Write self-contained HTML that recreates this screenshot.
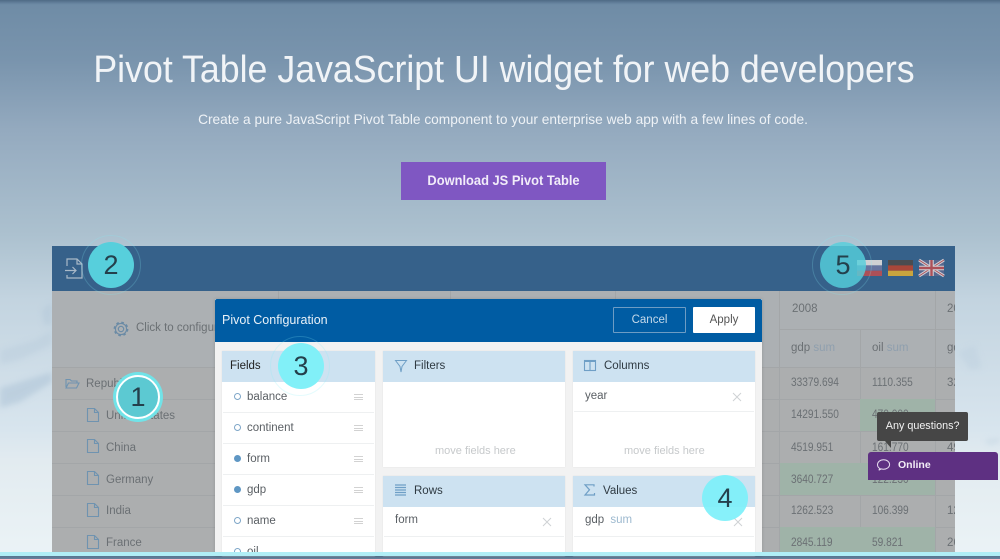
<!DOCTYPE html>
<html><head><meta charset="utf-8"><style>
*{box-sizing:border-box}
html,body{margin:0;padding:0}
body{width:1000px;height:556px;position:relative;overflow:hidden;font-family:"Liberation Sans",sans-serif;background:linear-gradient(180deg,#58748f 0,#6f8ca6 5px,#7994ad 60px,#94aabf 130px,#acc1cf 235px,#c3d4e0 300px,#d8e5ee 430px,#e2ebf0 460px,#ebf3f6 556px)}
div,span{position:absolute;white-space:nowrap}
svg{position:absolute;overflow:visible}
.t{color:#6b7074;font-size:11.5px;line-height:14px}
.n{transform:scaleX(.88);transform-origin:0 0}
.l{height:1px;background:#a3a6a8}
.v{width:1px;background:#a3a6a8}
.c{border-radius:50%;display:flex;align-items:center;justify-content:center;color:#24404c;font-size:27px;width:46px;height:46px}
.ring{border-radius:50%;border:1px solid rgba(130,235,245,.22)}
.ph{background:#cde2f1;height:31px}
.p{background:#fff;box-shadow:0 0 1px #d8d8d8}
.m{color:#5a5f64;font-size:11.5px;line-height:14px}
.h{color:#2f3a42;font-size:11.5px;line-height:14px}
.r{height:1px;background:#eef0f1}
.d{width:7px;height:7px;border-radius:50%;border:1px solid #7ea6c8;left:234px;background:#fff}
.f{background:#5f97c4;border-color:#5f97c4}
.g{left:354px;width:9px;height:6px;border-top:1px solid #d2d2d2;border-bottom:1px solid #d2d2d2}
.g:after{content:"";position:absolute;left:0;right:0;top:1.5px;height:1px;background:#d2d2d2}
.hint{color:#c6c9cb;font-size:11px}
</style></head><body>
<div style="left:0;top:0;width:1000px;height:4px;background:linear-gradient(#4f6a85,#6b88a3)"></div>

<svg width="1000" height="556" style="left:0;top:0"><defs><filter id="b"><feGaussianBlur stdDeviation="3"/></filter></defs>
<g filter="url(#b)" fill="#a9c0d4" opacity=".5"><path d="M0 350L35 340 52 330 52 345 20 360 0 365Z" opacity=".5"/><path d="M42 310L52 302 52 325 44 325Z" opacity=".7"/><path d="M0 388L52 372 52 382 20 402 0 408Z"/></g>
<g filter="url(#b)" fill="#bed0df" opacity=".5"><path d="M958 352L975 345 982 368 970 370Z"/><path d="M985 440L1000 438 1000 442 988 445Z"/></g></svg>

<div style="left:4px;width:1000px;top:48px;text-align:center;color:#f1f4f7;font-size:38px;line-height:44px;transform:scaleX(.94)">Pivot Table JavaScript UI widget for web developers</div>
<div style="left:3px;width:1000px;top:110px;text-align:center;color:#eef2f6;font-size:14px;line-height:18px;transform:scaleX(.98)">Create a pure JavaScript Pivot Table component to your enterprise web app with a few lines of code.</div>
<div style="left:401px;top:162px;width:205px;height:38px;background:#7f57c2;"></div>
<div style="left:401px;top:162px;width:205px;height:38px;color:#f1ecf9;font-size:14px;font-weight:700;text-align:center;line-height:37px;transform:scaleX(.92)">Download JS Pivot Table</div>

<!-- widget -->
<div style="left:52px;top:246px;width:903px;height:310px;background:#acaeaf;overflow:hidden">
<div style="left:0;top:0;width:903px;height:45px;background:#36618a"></div>
<div style="left:0;top:45px;width:903px;height:76px;background:#acb0b3"></div>
<div class="l" style="left:0;top:121px;width:903px"></div>
<div class="l" style="left:0;top:153px;width:903px"></div>
<div class="l" style="left:0;top:185px;width:903px"></div>
<div class="l" style="left:0;top:217px;width:903px"></div>
<div class="l" style="left:0;top:249px;width:903px"></div>
<div class="l" style="left:0;top:281px;width:903px"></div>
<div class="l" style="left:727px;top:83px;width:176px"></div>
<div class="v" style="left:226px;top:45px;height:8px"></div>
<div class="v" style="left:398px;top:45px;height:8px"></div>
<div class="v" style="left:563px;top:45px;height:8px"></div>
<div class="v" style="left:727px;top:45px;height:265px"></div>
<div class="v" style="left:808px;top:83px;height:227px"></div>
<div class="v" style="left:883px;top:45px;height:265px"></div>
<div style="left:808px;top:153px;width:75px;height:32px;background:#9fb3a8"></div>
<div style="left:728px;top:217px;width:155px;height:32px;background:#9fb3a8"></div>
<div style="left:728px;top:281px;width:155px;height:29px;background:#9fb3a8"></div>
</div>

<!-- widget header icon -->
<svg width="20" height="22" style="left:65px;top:258px" fill="none" stroke="#a9b9c8" stroke-width="1.2"><path d="M2 8V1h10l5 5v14H2v-3"/><path d="M12 1v5h5"/><path d="M0 12.5h11M7.5 9l3.5 3.5L7.5 16"/></svg>

<!-- flags -->
<svg width="25" height="16" style="left:857px;top:260px"><rect width="25" height="5.4" fill="#cfd0d3"/><rect y="5.4" width="25" height="5.3" fill="#66749f"/><rect y="10.7" width="25" height="5.3" fill="#ad5058"/></svg>
<svg width="25" height="16" style="left:888px;top:260px"><rect width="25" height="16" fill="#4b4c50"/><rect y="5.4" width="25" height="5.3" fill="#a9473a"/><rect y="10.7" width="25" height="5.3" fill="#c9a53e"/></svg>
<svg width="25" height="16" style="left:919px;top:260px"><rect width="25" height="16" fill="#57688f"/><path d="M0 0L25 16M25 0L0 16" stroke="#cfd0d6" stroke-width="3"/><path d="M0 0L25 16M25 0L0 16" stroke="#ad5058" stroke-width="1"/><path d="M12.5 0V16M0 8H25" stroke="#cfd0d6" stroke-width="4.5"/><path d="M12.5 0V16M0 8H25" stroke="#ad5058" stroke-width="2.4"/></svg>

<!-- left column -->
<svg width="16" height="16" style="left:113px;top:321px" fill="none" stroke="#6a8aa5"><circle cx="8" cy="8" r="2.7" stroke-width="1.1"/><circle cx="8" cy="8" r="5.6" stroke-width="1.1"/><circle cx="8" cy="8" r="6.6" stroke-width="1.6" stroke-dasharray="2.6 2.6"/></svg>
<div class="t" style="left:136px;top:321px">Click to configure</div>
<svg width="15" height="11" style="left:65px;top:378px" fill="none" stroke="#6f93b0" stroke-width="1.1"><path d="M1 9V1.5h4l1.5 1.5H12v2M1 10h10.5L14 5H3.5L1 10z"/></svg>
<div class="t" style="left:86px;top:377px">Republic</div>
<svg width="12" height="14" style="left:87px;top:408px" fill="none" stroke="#6f93b0" stroke-width="1.1"><path d="M.5.5h7l4 4v9H.5z M7.5.5v4h4"/></svg>
<div class="t" style="left:106px;top:409px">United States</div>
<svg width="12" height="14" style="left:87px;top:439px" fill="none" stroke="#6f93b0" stroke-width="1.1"><path d="M.5.5h7l4 4v9H.5z M7.5.5v4h4"/></svg>
<div class="t" style="left:106px;top:441px">China</div>
<svg width="12" height="14" style="left:87px;top:471px" fill="none" stroke="#6f93b0" stroke-width="1.1"><path d="M.5.5h7l4 4v9H.5z M7.5.5v4h4"/></svg>
<div class="t" style="left:106px;top:473px">Germany</div>
<svg width="12" height="14" style="left:87px;top:503px" fill="none" stroke="#6f93b0" stroke-width="1.1"><path d="M.5.5h7l4 4v9H.5z M7.5.5v4h4"/></svg>
<div class="t" style="left:106px;top:504px">India</div>
<svg width="12" height="14" style="left:87px;top:535px" fill="none" stroke="#6f93b0" stroke-width="1.1"><path d="M.5.5h7l4 4v9H.5z M7.5.5v4h4"/></svg>
<div class="t" style="left:106px;top:536px">France</div>

<!-- right columns -->
<div class="t" style="left:792px;top:302px">2008</div><div class="t" style="left:947px;top:302px;width:8px;overflow:hidden">2009</div>
<div class="t" style="left:791px;top:341px">gdp <span style="position:static;color:#8f9fae">sum</span></div>
<div class="t" style="left:872px;top:341px">oil <span style="position:static;color:#8f9fae">sum</span></div>
<div class="t" style="left:947px;top:341px;width:8px;overflow:hidden">gdp</div>
<div class="t n" style="left:791px;top:376px">33379.694</div><div class="t n" style="left:872px;top:376px">1110.355</div><div class="t" style="left:947px;top:376px;width:8px;overflow:hidden">32</div>
<div class="t n" style="left:791px;top:408px">14291.550</div><div class="t n" style="left:872px;top:408px">470.000</div>
<div class="t n" style="left:791px;top:441px">4519.951</div><div class="t n" style="left:872px;top:441px">161.770</div><div class="t" style="left:947px;top:441px;width:8px;overflow:hidden">49</div>
<div class="t n" style="left:791px;top:473px">3640.727</div><div class="t n" style="left:872px;top:473px">122.230</div>
<div class="t n" style="left:791px;top:504px">1262.523</div><div class="t n" style="left:872px;top:504px">106.399</div><div class="t" style="left:947px;top:504px;width:8px;overflow:hidden">12</div>
<div class="t n" style="left:791px;top:536px">2845.119</div><div class="t n" style="left:872px;top:536px">59.821</div><div class="t" style="left:947px;top:536px;width:8px;overflow:hidden">26</div>

<!-- modal -->
<div style="left:215px;top:299px;width:547px;height:257px;background:#f2f2f2;box-shadow:0 0 3px rgba(0,0,0,.15)"></div>
<div style="left:215px;top:299px;width:547px;height:43px;background:#005ca3;border-radius:2px 2px 0 0"></div>
<div style="left:222px;top:313px;color:#e9f1f8;font-size:12.5px;line-height:15px">Pivot Configuration</div>
<div style="left:613px;top:307px;width:73px;height:26px;border:1px solid #6d9cc4;border-radius:1px;color:#c4d9ea;font-size:11.5px;line-height:25px;text-align:center">Cancel</div>
<div style="left:693px;top:307px;width:62px;height:26px;background:#fff;border-radius:1px;color:#555;font-size:11.5px;line-height:26px;text-align:center">Apply</div>

<!-- fields -->
<div class="p" style="left:222px;top:351px;width:153px;height:205px"></div>
<div class="ph" style="left:222px;top:351px;width:153px"></div>
<div class="h" style="left:230px;top:359px;color:#222;">Fields</div>
<div class="r" style="left:223px;top:412px;width:151px"></div><div class="r" style="left:223px;top:443px;width:151px"></div><div class="r" style="left:223px;top:474px;width:151px"></div><div class="r" style="left:223px;top:505px;width:151px"></div><div class="r" style="left:223px;top:536px;width:151px"></div>
<div class="d" style="top:393px"></div><div class="m" style="left:247px;top:390px">balance</div><div class="g" style="top:394px"></div>
<div class="d" style="top:424px"></div><div class="m" style="left:247px;top:421px">continent</div><div class="g" style="top:425px"></div>
<div class="d f" style="top:455px"></div><div class="m" style="left:247px;top:452px">form</div><div class="g" style="top:456px"></div>
<div class="d f" style="top:486px"></div><div class="m" style="left:247px;top:483px">gdp</div><div class="g" style="top:487px"></div>
<div class="d" style="top:517px"></div><div class="m" style="left:247px;top:514px">name</div><div class="g" style="top:518px"></div>
<div class="d" style="top:548px"></div><div class="m" style="left:247px;top:545px">oil</div>

<!-- filters -->
<div class="p" style="left:383px;top:351px;width:182px;height:116px"></div>
<div class="ph" style="left:383px;top:351px;width:182px"></div>
<svg width="13" height="13" style="left:395px;top:360px" fill="none" stroke="#6f9fc6" stroke-width="1"><path d="M.5.5h11L7 6.5 6 12 5 6.5z"/></svg>
<div class="h" style="left:414px;top:359px">Filters</div>
<div class="hint" style="left:435px;top:445px">move fields here</div>

<!-- columns -->
<div class="p" style="left:573px;top:351px;width:182px;height:116px"></div>
<div class="ph" style="left:573px;top:351px;width:182px"></div>
<svg width="13" height="12" style="left:584px;top:360px" fill="none" stroke="#6f9fc6" stroke-width="1.1"><rect x=".5" y=".5" width="11" height="10"/><path d="M6 .5v10M.5 1.5h11" /></svg>
<div class="h" style="left:604px;top:359px">Columns</div>
<div class="m" style="left:585px;top:389px">year</div>
<svg width="10" height="10" style="left:732px;top:392px" stroke="#cfd2d4" stroke-width="1"><path d="M1 1l8 8M9 1l-8 8"/></svg>
<div class="r" style="left:574px;top:411px;width:180px"></div>
<div class="hint" style="left:624px;top:445px">move fields here</div>

<!-- rows -->
<div class="p" style="left:383px;top:476px;width:182px;height:80px"></div>
<div class="ph" style="left:383px;top:476px;width:182px"></div>
<svg width="12" height="12" style="left:395px;top:484px" stroke="#6f9fc6" stroke-width="1.2"><path d="M0 1h11M0 3.5h11M0 6h11M0 8.5h11M0 11h11"/></svg>
<div class="h" style="left:414px;top:484px">Rows</div>
<div class="m" style="left:395px;top:513px">form</div>
<svg width="10" height="10" style="left:542px;top:517px" stroke="#cfd2d4" stroke-width="1"><path d="M1 1l8 8M9 1l-8 8"/></svg>
<div class="r" style="left:384px;top:536px;width:180px"></div>

<!-- values -->
<div class="p" style="left:573px;top:476px;width:182px;height:80px"></div>
<div class="ph" style="left:573px;top:476px;width:182px"></div>
<svg width="12" height="12" style="left:584px;top:484px" fill="none" stroke="#6f9fc6" stroke-width="1.2"><path d="M10 2.5V.8H1l4.5 5L1 11h9.5V9"/></svg>
<div class="h" style="left:603px;top:484px">Values</div>
<div class="m" style="left:585px;top:513px">gdp <span style="position:static;color:#9db9cf;margin-left:3px">sum</span></div>
<svg width="10" height="10" style="left:733px;top:517px" stroke="#cfd2d4" stroke-width="1"><path d="M1 1l8 8M9 1l-8 8"/></svg>
<div class="r" style="left:574px;top:536px;width:180px"></div>

<!-- numbered circles -->
<div class="ring" style="left:81px;top:235px;width:60px;height:60px"></div>
<div class="c" style="left:88px;top:242px;background:#57cfdc">2</div>
<div class="ring" style="left:270px;top:336px;width:60px;height:60px"></div>
<div class="c" style="left:278px;top:343px;background:#81f0f8">3</div>
<div class="c" style="left:702px;top:475px;background:rgba(125,240,250,.92)">4</div>
<div class="ring" style="left:812px;top:235px;width:60px;height:60px"></div>
<div class="c" style="left:820px;top:242px;background:rgba(85,207,220,.82)">5</div>
<div class="c" style="left:116px;top:375px;width:44px;height:44px;background:#5cc9d2;border:2px solid #fff;box-shadow:0 0 0 3px #71e3e8">1</div>

<!-- chat -->
<div style="left:868px;top:452px;width:130px;height:28px;background:#5e3082;border-radius:3px 3px 0 0;color:#f3eef7;font-size:10.5px;font-weight:700;line-height:27px;padding-left:30px"><span style="position:static">Online</span></div>
<div style="left:877px;top:412px;width:91px;height:29px;background:#464646;border-radius:2px;color:#f3f3f3;font-size:11px;line-height:28px;text-align:center"><span style="position:static;display:inline-block;transform:scaleX(.98)">Any questions?</span></div>
<div style="left:885px;top:441px;width:0;height:0;border-left:6px solid transparent;border-top:7px solid #464646"></div>
<svg width="14" height="12" style="left:877px;top:459px" fill="none" stroke="#e8def0" stroke-width="1"><path d="M3 9.6C1.5 8.8.5 7.4.5 5.6.5 3 3 .8 6.6.8s6 2.2 6 4.8-2.7 4.6-6 4.6c-.8 0-1.6-.1-2.3-.3L1.8 11.2z"/></svg>

<div style="left:0;top:552px;width:1000px;height:4px;background:#b0eef6"></div>
</body></html>
